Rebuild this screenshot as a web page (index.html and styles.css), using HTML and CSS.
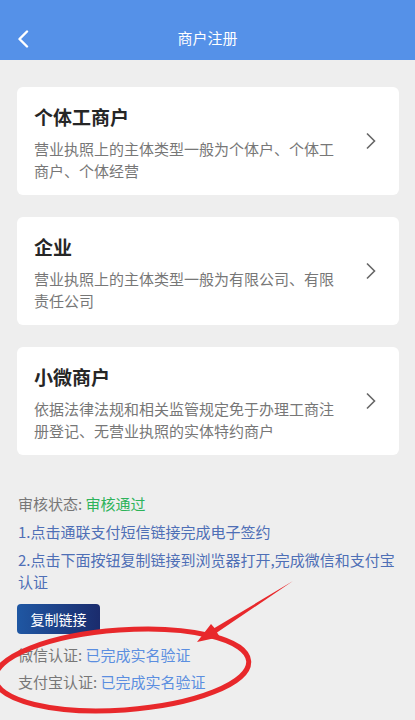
FILE: index.html
```html
<!DOCTYPE html>
<html lang="zh-CN">
<head>
<meta charset="utf-8">
<title>商户注册</title>
<link rel="stylesheet" href="styles.css">
</head>
<body>
<div class="page">
  <header class="topbar">
    <svg class="back" width="12" height="18" viewBox="0 0 12 18"><path d="M10 1.5 L2.5 9 L10 16.5" fill="none" stroke="#fff" stroke-width="2.4" stroke-linecap="round" stroke-linejoin="round"/></svg>
    <h1 class="title">商户注册</h1>
  </header>

  <main class="list">
    <div class="card">
      <div class="card-text">
        <div class="card-title">个体工商户</div>
        <div class="card-desc">营业执照上的主体类型一般为个体户、个体工商户、个体经营</div>
      </div>
      <svg class="chev" width="10" height="18" viewBox="0 0 10 18"><path d="M1 1.5 L8.5 9 L1 16.5" fill="none" stroke="#666" stroke-width="1.6"/></svg>
    </div>
    <div class="card">
      <div class="card-text">
        <div class="card-title">企业</div>
        <div class="card-desc">营业执照上的主体类型一般为有限公司、有限责任公司</div>
      </div>
      <svg class="chev" width="10" height="18" viewBox="0 0 10 18"><path d="M1 1.5 L8.5 9 L1 16.5" fill="none" stroke="#666" stroke-width="1.6"/></svg>
    </div>
    <div class="card">
      <div class="card-text">
        <div class="card-title">小微商户</div>
        <div class="card-desc">依据法律法规和相关监管规定免于办理工商注册登记、无营业执照的实体特约商户</div>
      </div>
      <svg class="chev" width="10" height="18" viewBox="0 0 10 18"><path d="M1 1.5 L8.5 9 L1 16.5" fill="none" stroke="#666" stroke-width="1.6"/></svg>
    </div>
  </main>

  <section class="status">
    <p class="line"><span class="label">审核状态:</span> <span class="ok">审核通过</span></p>
    <p class="line step">1.点击通联支付短信链接完成电子签约</p>
    <p class="line step">2.点击下面按钮复制链接到浏览器打开,完成微信和支付宝认证</p>
    <button class="copy">复制链接</button>
    <p class="line auth first"><span class="label">微信认证:</span> <span class="done">已完成实名验证</span></p>
    <p class="line auth"><span class="label">支付宝认证:</span> <span class="done">已完成实名验证</span></p>
  </section>

  <svg class="mark" width="415" height="720" viewBox="0 0 415 720">
    <ellipse cx="122" cy="670" rx="127" ry="40" transform="rotate(-4 122 670)" fill="none" stroke="#e8282b" stroke-width="5"/>
    <polygon points="293,581 217,632.5 220,637 197,642 211,624 214.5,628" fill="#e8282b"/>
  </svg>
</div>
</body>
</html>
```

FILE: styles.css
```css
* { box-sizing: border-box; }
html, body {
  margin: 0;
  padding: 0;
  background: #eeeeee;
  font-family: "Noto Sans CJK SC", "Noto Sans", sans-serif;
}
.page {
  position: relative;
  width: 415px;
  height: 720px;
  overflow: hidden;
}
.topbar {
  position: relative;
  height: 60px;
  padding-top: 15px;
  background: #5591e8;
  display: flex;
  align-items: center;
  justify-content: center;
}
.back {
  position: absolute;
  left: 17px;
  top: 30px;
}
.title {
  margin: 0;
  font-size: 15px;
  font-weight: normal;
  color: #fff;
  line-height: 44px;
}
.list {
  padding: 27px 16px 0 17px;
  display: flex;
  flex-direction: column;
  gap: 22px;
}
.card {
  background: #fff;
  border-radius: 6px;
  height: 108px;
  padding: 0 23px 0 17px;
  display: flex;
  align-items: center;
  gap: 28px;
}
.card-text {
  flex: 1;
  align-self: flex-start;
  padding-top: 17px;
}
.card-title {
  font-size: 19px;
  font-weight: bold;
  color: #262626;
  line-height: 26px;
}
.card-desc {
  margin-top: 8px;
  font-size: 15px;
  line-height: 22px;
  color: #777;
}
.chev { flex: none; }
.status {
  padding: 38px 17px 0 18px;
  font-size: 15px;
}
.line {
  margin: 0 0 6px;
  line-height: 22px;
}
.label { color: #777; }
.ok { color: #2db35a; }
.step { color: #4e6fb6; }
.copy {
  display: block;
  margin: 11px 0 0 -1px;
  width: 83px;
  height: 30px;
  border: none;
  border-radius: 4px;
  background: linear-gradient(90deg, #1f57a3, #1b2c6d);
  color: #fff;
  font-family: inherit;
  font-size: 14px;
  padding: 0;
}
.auth.first { margin-top: 10px; }
.auth { margin-bottom: 5px; }
.done { color: #5b8ee0; }
.mark {
  position: absolute;
  left: 0;
  top: 0;
  pointer-events: none;
}
```
